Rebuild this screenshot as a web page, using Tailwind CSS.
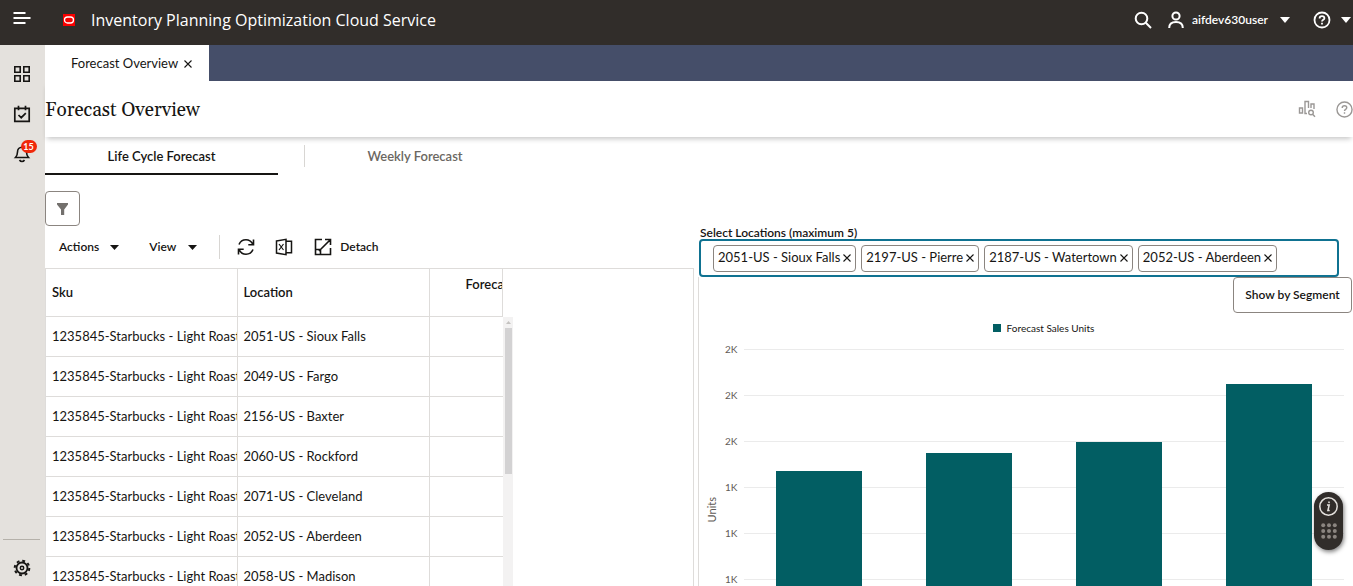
<!DOCTYPE html>
<html lang="en">
<head>
    <meta charset="UTF-8">
    <meta name="viewport" content="width=device-width, initial-scale=1.0">
    <title>Inventory Planning Optimization Cloud Service</title>
    <script src="https://cdn.jsdelivr.net/npm/@tailwindcss/browser@4"></script>
</head>
<body class="h-screen flex flex-col overflow-hidden bg-white font-['Lato','Open_Sans',sans-serif] text-[13px] text-[#161513]">

    <!-- Top bar -->
    <header class="h-[45px] shrink-0 bg-[#312d2a] text-white flex items-center pb-[5px]">
        <button class="w-11 flex justify-center pb-1" aria-label="Menu">
            <svg class="w-[18px] h-[14px]" viewBox="0 0 18 14" fill="none" stroke="currentColor" stroke-width="2"><path d="M0.500 2h12M0.500 7h17M0.500 12h12"/></svg>
        </button>
        <svg class="ml-[19px] w-3 h-3" viewBox="0 0 12 12"><rect width="12" height="12" fill="#f80000"/><rect x="1.500" y="3" width="9" height="6" rx="3" fill="none" stroke="#fff" stroke-width="1.300"/></svg>
        <h1 class="ml-4 text-base font-['Open_Sans',sans-serif]">Inventory Planning Optimization Cloud Service</h1>
        <div class="ml-auto flex items-center">
            <button aria-label="Search">
                <svg class="w-[18px] h-[18px]" viewBox="0 0 18 18" fill="none" stroke="currentColor" stroke-width="2"><circle cx="7.500" cy="7.500" r="5.800"/><path d="M11.800 11.800L17 17"/></svg>
            </button>
            <button class="ml-4 flex items-center text-[12px] font-semibold">
                <svg class="w-4 h-[18px]" viewBox="0 0 16 18" fill="none" stroke="currentColor" stroke-width="2"><circle cx="8" cy="5" r="3.600"/><path d="M1.200 17c0-4 2.800-6 6.800-6s6.800 2 6.800 6"/></svg>
                <span class="ml-2">aifdev630user</span>
                <svg class="ml-3 w-[10px] h-[6px]" viewBox="0 0 10 6" fill="currentColor"><path d="M0 0h10L5 6z"/></svg>
            </button>
            <button class="ml-[23px] mr-[2px] flex items-center" aria-label="Help">
                <svg class="w-[18px] h-[18px]" viewBox="0 0 18 18" fill="none" stroke="currentColor" stroke-width="1.800"><circle cx="9" cy="9" r="7.500"/><path d="M6.600 7.400c0-1.500 1-2.300 2.400-2.300s2.400.8 2.400 2.100c0 1.600-2.400 1.700-2.400 3.400M9 11.800v1.700"/></svg>
                <svg class="ml-[10px] w-[10px] h-[6px]" viewBox="0 0 10 6" fill="currentColor"><path d="M0 0h10L5 6z"/></svg>
            </button>
        </div>
    </header>

    <div class="flex flex-1 min-h-0">
        <!-- Side bar -->
        <nav class="w-[45px] shrink-0 bg-[#e4e1dd] flex flex-col items-center pt-5 pb-[9px] pr-[2px]">
            <button aria-label="Applications">
                <svg class="w-[18px] h-[18px]" viewBox="0 0 18 18" fill="none" stroke="currentColor" stroke-width="1.600"><path d="M1.800 1.800h5.400v5.400H1.800zM10.800 1.800h5.400v5.400h-5.400zM1.800 10.800h5.400v5.400H1.800zM10.800 10.800h5.400v5.400h-5.400z"/></svg>
            </button>
            <button class="mt-[22px]" aria-label="Tasks">
                <svg class="w-[18px] h-[18px]" viewBox="0 0 18 18" fill="none" stroke="currentColor" stroke-width="1.700"><path d="M1.800 3.300h14.400v13H1.800zM5.500 0.800v4.500M12.500 0.800v4.500M5.500 10l2.700 2.700 4.600-4.600"/></svg>
            </button>
            <button class="mt-[22px] relative" aria-label="Notifications">
                <svg class="w-[18px] h-[18px]" viewBox="0 0 18 18" fill="none" stroke="currentColor" stroke-width="1.600"><path d="M2.500 12.500h13c-1.500-1.700-2-3-2-5.500 0-2.800-1.700-4.800-4.500-4.800S4.500 4.200 4.500 7c0 2.500-.5 3.800-2 5.500zM6.500 15c.6 1 1.400 1.500 2.500 1.500s1.900-.5 2.500-1.500"/></svg>
                <span class="absolute -top-[5px] left-2 w-4 h-[13px] rounded-full bg-[#f0280a] text-white text-[9px] leading-[13px] font-bold text-center">15</span>
            </button>
            <div class="mt-auto w-[37px] border-t border-[#b5b1aa]"></div>
            <button class="mt-[19px]" aria-label="Settings">
                <svg class="w-[18px] h-[18px]" viewBox="0 0 18 18" fill="none" stroke="currentColor"><circle cx="9" cy="9" r="5.500" stroke-width="1.800"/><circle cx="9" cy="9" r="7.300" stroke-width="2" stroke-dasharray="2.870 2.870"/><circle cx="9" cy="9" r="1.700" stroke-width="1.500"/></svg>
            </button>
        </nav>

        <main class="flex-1 min-w-0 flex flex-col">
            <!-- Open tabs -->
            <div class="h-9 shrink-0 bg-[#454e69] flex">
                <div class="w-[164px] bg-white flex items-center pl-[26px] pt-px">
                    <span>Forecast Overview</span>
                    <button class="ml-[6px]" aria-label="Close tab">
                        <svg class="w-2 h-2" viewBox="0 0 8 8" fill="none" stroke="currentColor" stroke-width="1.100"><path d="M0.500 0.500l7 7M7.500 0.500l-7 7"/></svg>
                    </button>
                </div>
            </div>

            <!-- Page title -->
            <div class="h-14 shrink-0 flex items-center shadow-[0_4px_5px_-2px_rgba(0,0,0,0.22)]">
                <h2 class="pt-[2px] font-['Gelasio','Georgia','Liberation_Serif',serif] text-[19px]">Forecast Overview</h2>
                <div class="ml-auto flex items-center text-[#9b9896]">
                    <button aria-label="Analytics">
                        <svg class="w-[18px] h-[18px]" viewBox="0 0 18 18" fill="none" stroke="currentColor" stroke-width="1.400"><path d="M1.500 8h3v5h-3zM7 13V1.500h3.500V8M13 8V4h3v5M7 1.500V13.500h2"/><circle cx="13" cy="12.500" r="2.300"/><path d="M14.600 14.200l2.400 2.500"/></svg>
                    </button>
                    <button class="ml-5" aria-label="Page help">
                        <svg class="w-[17px] h-[17px]" viewBox="0 0 18 18" fill="none" stroke="currentColor" stroke-width="1.500"><circle cx="9" cy="9" r="8"/><path d="M6.600 7.400c0-1.500 1-2.300 2.400-2.300s2.400.8 2.400 2.100c0 1.600-2.400 1.700-2.400 3.400M9 11.800v1.700"/></svg>
                    </button>
                </div>
            </div>

            <!-- Forecast tabs -->
            <div class="h-[38px] shrink-0 flex items-center">
                <button class="w-[233px] h-full pt-[3px] border-b-2 border-[#161513] font-semibold text-center">Life Cycle Forecast</button>
                <div class="ml-[26px] h-[22px] border-l border-[#d8d6d3]"></div>
                <button class="w-[220px] pt-px text-center font-semibold text-[#6b6762]">Weekly Forecast</button>
            </div>

            <div class="flex flex-1 min-h-0 pt-4">
                <!-- Forecast table -->
                <section class="w-[649px] shrink-0 flex flex-col">
                    <button class="w-[35px] h-[35px] shrink-0 border border-[#8b8580] rounded flex items-center justify-center text-[#73706d]" aria-label="Filter">
                        <svg class="w-[11px] h-3" viewBox="0 0 11 12" fill="currentColor"><path d="M0 0h11v1.500L7.200 6.500V12H4V6.500L0 1.500z"/></svg>
                    </button>
                    <div class="h-[42px] shrink-0 flex items-center pl-[14px] text-[12px] font-semibold">
                        <button class="flex items-center">Actions
                            <svg class="ml-[11px] w-[9px] h-[5px]" viewBox="0 0 9 5" fill="currentColor"><path d="M0 0h9L4.500 5z"/></svg>
                        </button>
                        <button class="ml-[30px] flex items-center">View
                            <svg class="ml-3 w-[9px] h-[5px]" viewBox="0 0 9 5" fill="currentColor"><path d="M0 0h9L4.500 5z"/></svg>
                        </button>
                        <div class="ml-[22px] h-6 border-l border-[#d8d6d3]"></div>
                        <button class="ml-[17px]" aria-label="Refresh">
                            <svg class="w-[18px] h-[18px]" viewBox="0 0 18 18" fill="none" stroke="currentColor" stroke-width="1.600"><path d="M2 6.500C3.200 3.600 5.800 1.800 9 1.800c3 0 5.300 1.500 6.800 4.400M16.500 1.500v5.200h-5.200M16 11.500c-1.200 2.900-3.800 4.700-7 4.700-3 0-5.300-1.500-6.800-4.400M1.500 16.500v-5.200h5.200"/></svg>
                        </button>
                        <button class="ml-5" aria-label="Export to Excel">
                            <svg class="w-[18px] h-[18px]" viewBox="0 0 18 18" fill="none" stroke="currentColor" stroke-width="1.500"><path d="M1.500 3l9.500-1.700v15.400L1.500 15zM11 3.200h5.500v11.600H11"/><path stroke-width="1.200" d="M4 6l4.500 6M8.500 6L4 12"/></svg>
                        </button>
                        <button class="ml-[21px] flex items-center">
                            <svg class="w-[18px] h-[18px]" viewBox="0 0 18 18" fill="none" stroke="currentColor" stroke-width="1.600"><path d="M8 1.500H1.500v15h15V10M5 13L16.500 1.500M11 1.500h5.500V7M1.500 11.500h5v5"/></svg>
                            <span class="ml-2">Detach</span>
                        </button>
                    </div>
                    <div class="flex-1 min-h-0 overflow-hidden flex border border-b-0 border-[#dedcda]">
                        <div class="w-[457px] shrink-0">
                            <table class="w-full table-fixed border-collapse whitespace-nowrap">
                                <thead>
                                    <tr class="h-[47px] text-left">
                                        <th class="w-[191px] pl-[6px] font-semibold border-r border-[#dedcda]">Sku</th>
                                        <th class="w-[192px] pl-[6px] font-semibold border-r border-[#dedcda]">Location</th>
                                        <th class="pl-9 pb-4 font-semibold overflow-hidden border-r border-[#dedcda]">Forecast</th>
                                    </tr>
                                </thead>
                                <tbody>
                                    <tr class="h-10 border-y border-[#dedcda]">
                                        <td class="pl-[6px] pt-px overflow-hidden border-r border-[#dedcda]">1235845-Starbucks - Light Roast</td>
                                        <td class="pl-[6px] pt-px border-r border-[#dedcda]">2051-US - Sioux Falls</td>
                                        <td></td>
                                    </tr>
                                    <tr class="h-10 border-b border-[#dedcda]">
                                        <td class="pl-[6px] pt-px overflow-hidden border-r border-[#dedcda]">1235845-Starbucks - Light Roast</td>
                                        <td class="pl-[6px] pt-px border-r border-[#dedcda]">2049-US - Fargo</td>
                                        <td></td>
                                    </tr>
                                    <tr class="h-10 border-b border-[#dedcda]">
                                        <td class="pl-[6px] pt-px overflow-hidden border-r border-[#dedcda]">1235845-Starbucks - Light Roast</td>
                                        <td class="pl-[6px] pt-px border-r border-[#dedcda]">2156-US - Baxter</td>
                                        <td></td>
                                    </tr>
                                    <tr class="h-10 border-b border-[#dedcda]">
                                        <td class="pl-[6px] pt-px overflow-hidden border-r border-[#dedcda]">1235845-Starbucks - Light Roast</td>
                                        <td class="pl-[6px] pt-px border-r border-[#dedcda]">2060-US - Rockford</td>
                                        <td></td>
                                    </tr>
                                    <tr class="h-10 border-b border-[#dedcda]">
                                        <td class="pl-[6px] pt-px overflow-hidden border-r border-[#dedcda]">1235845-Starbucks - Light Roast</td>
                                        <td class="pl-[6px] pt-px border-r border-[#dedcda]">2071-US - Cleveland</td>
                                        <td></td>
                                    </tr>
                                    <tr class="h-10 border-b border-[#dedcda]">
                                        <td class="pl-[6px] pt-px overflow-hidden border-r border-[#dedcda]">1235845-Starbucks - Light Roast</td>
                                        <td class="pl-[6px] pt-px border-r border-[#dedcda]">2052-US - Aberdeen</td>
                                        <td></td>
                                    </tr>
                                    <tr class="h-10 border-b border-[#dedcda]">
                                        <td class="pl-[6px] pt-px overflow-hidden border-r border-[#dedcda]">1235845-Starbucks - Light Roast</td>
                                        <td class="pl-[6px] pt-px border-r border-[#dedcda]">2058-US - Madison</td>
                                        <td></td>
                                    </tr>
                                </tbody>
                            </table>
                        </div>
                        <!-- Scrollbar -->
                        <div class="mt-12 w-[10px] bg-[#f3f2f2] flex flex-col items-center pt-1">
                            <svg class="w-[5px] h-[3px] shrink-0" viewBox="0 0 5 3" fill="#c4c2c0"><path d="M0 3h5L2.500 0z"/></svg>
                            <div class="mt-1 w-[7px] h-[146px] shrink-0 bg-[#d3d2d3]"></div>
                        </div>
                    </div>
                </section>

                <!-- Chart panel -->
                <section class="flex-1 min-w-0 ml-1 flex flex-col pt-[35px]">
                    <label for="locations" class="pl-[2px] h-[13px] text-[12px] leading-[14px] font-semibold">Select Locations (maximum 5)</label>
                    <div class="ml-px mr-[14px] h-[38px] shrink-0 border-2 border-[#0f7291] rounded-sm flex items-center gap-[5px] pl-3 pr-4">
                        <span class="h-[27px] shrink-0 border border-[#8b8580] rounded-sm flex items-center gap-[3px] px-1">2051-US - Sioux Falls
                            <button aria-label="Remove Sioux Falls"><svg class="w-2 h-2" viewBox="0 0 8 8" fill="none" stroke="currentColor" stroke-width="1.100"><path d="M0.500 0.500l7 7M7.500 0.500l-7 7"/></svg></button>
                        </span>
                        <span class="h-[27px] shrink-0 border border-[#8b8580] rounded-sm flex items-center gap-[3px] px-1">2197-US - Pierre
                            <button aria-label="Remove Pierre"><svg class="w-2 h-2" viewBox="0 0 8 8" fill="none" stroke="currentColor" stroke-width="1.100"><path d="M0.500 0.500l7 7M7.500 0.500l-7 7"/></svg></button>
                        </span>
                        <span class="h-[27px] shrink-0 border border-[#8b8580] rounded-sm flex items-center gap-[3px] px-1">2187-US - Watertown
                            <button aria-label="Remove Watertown"><svg class="w-2 h-2" viewBox="0 0 8 8" fill="none" stroke="currentColor" stroke-width="1.100"><path d="M0.500 0.500l7 7M7.500 0.500l-7 7"/></svg></button>
                        </span>
                        <span class="h-[27px] shrink-0 border border-[#8b8580] rounded-sm flex items-center gap-[3px] px-1">2052-US - Aberdeen
                            <button aria-label="Remove Aberdeen"><svg class="w-2 h-2" viewBox="0 0 8 8" fill="none" stroke="currentColor" stroke-width="1.100"><path d="M0.500 0.500l7 7M7.500 0.500l-7 7"/></svg></button>
                        </span>
                        <input id="locations" type="text" class="flex-1 min-w-0 outline-none">
                    </div>

                    <div class="flex-1 min-h-0 overflow-hidden border-l border-[#dedcda] flex flex-col">
                        <button class="self-end mr-px w-[119px] h-9 shrink-0 border border-[#8b8580] rounded-sm text-[12px] font-semibold">Show by Segment</button>
                        <div class="mt-[7px] h-4 shrink-0 flex items-center justify-center gap-[6px] pl-[35px] text-[10px]">
                            <span class="w-2 h-2 bg-[#025e63]"></span>Forecast Sales Units
                        </div>
                        <div class="flex pt-[13px] pr-[9px] text-[10px] text-[#5f5b57]">
                            <div class="w-[26px] h-[322px] shrink-0 flex items-center justify-center">
                                <span class="[writing-mode:vertical-rl] rotate-180 leading-[14px] text-[11px]">Units</span>
                            </div>
                            <div class="flex-1 grid">
                                <div class="col-start-1 row-start-1">
                                    <div class="h-[46px] flex gap-2"><span class="w-[11px] leading-[1px]">2K</span><div class="flex-1 border-t border-[#ebebeb]"></div></div>
                                    <div class="h-[46px] flex gap-2"><span class="w-[11px] leading-[1px]">2K</span><div class="flex-1 border-t border-[#ebebeb]"></div></div>
                                    <div class="h-[46px] flex gap-2"><span class="w-[11px] leading-[1px]">2K</span><div class="flex-1 border-t border-[#ebebeb]"></div></div>
                                    <div class="h-[46px] flex gap-2"><span class="w-[11px] leading-[1px]">1K</span><div class="flex-1 border-t border-[#ebebeb]"></div></div>
                                    <div class="h-[46px] flex gap-2"><span class="w-[11px] leading-[1px]">1K</span><div class="flex-1 border-t border-[#ebebeb]"></div></div>
                                    <div class="h-[46px] flex gap-2"><span class="w-[11px] leading-[1px]">1K</span><div class="flex-1 border-t border-[#ebebeb]"></div></div>
                                </div>
                                <!-- Bars -->
                                <div class="col-start-1 row-start-1 pl-[19px] grid grid-cols-4 items-end justify-items-center">
                                    <div class="w-[57%] bg-[#025e63]" style="height: 200px"></div>
                                    <div class="w-[57%] bg-[#025e63]" style="height: 218px"></div>
                                    <div class="w-[57%] bg-[#025e63]" style="height: 229px"></div>
                                    <div class="w-[57%] bg-[#025e63]" style="height: 287px"></div>
                                </div>
                            </div>
                        </div>
                    </div>
                </section>
            </div>
        </main>
    </div>

    <!-- Floating guide button -->
    <button class="fixed right-[10px] bottom-9 w-[29px] h-[58px] rounded-full bg-[#312d2a] shadow-[1px_2px_4px_rgba(0,0,0,0.5)] flex flex-col items-center pt-[5px]" aria-label="Guide">
        <svg class="w-[19px] h-[19px]" viewBox="0 0 19 19" fill="none" stroke="#e4e1dd"><circle cx="9.500" cy="9.500" r="8.700" stroke-width="1.500"/><path stroke-width="1.500" d="M8 8h2.200l-1.300 5.500h1.800M10.200 4.500l-.3 1.600"/></svg>
        <svg class="mt-[7px] w-4 h-4" viewBox="0 0 16 16" fill="#8b8580"><circle cx="2.200" cy="2.200" r="2"/><circle cx="8" cy="2.200" r="2"/><circle cx="13.800" cy="2.200" r="2"/><circle cx="2.200" cy="8" r="2"/><circle cx="8" cy="8" r="2"/><circle cx="13.800" cy="8" r="2"/><circle cx="2.200" cy="13.800" r="2"/><circle cx="8" cy="13.800" r="2"/><circle cx="13.800" cy="13.800" r="2"/></svg>
    </button>

</body>
</html>
